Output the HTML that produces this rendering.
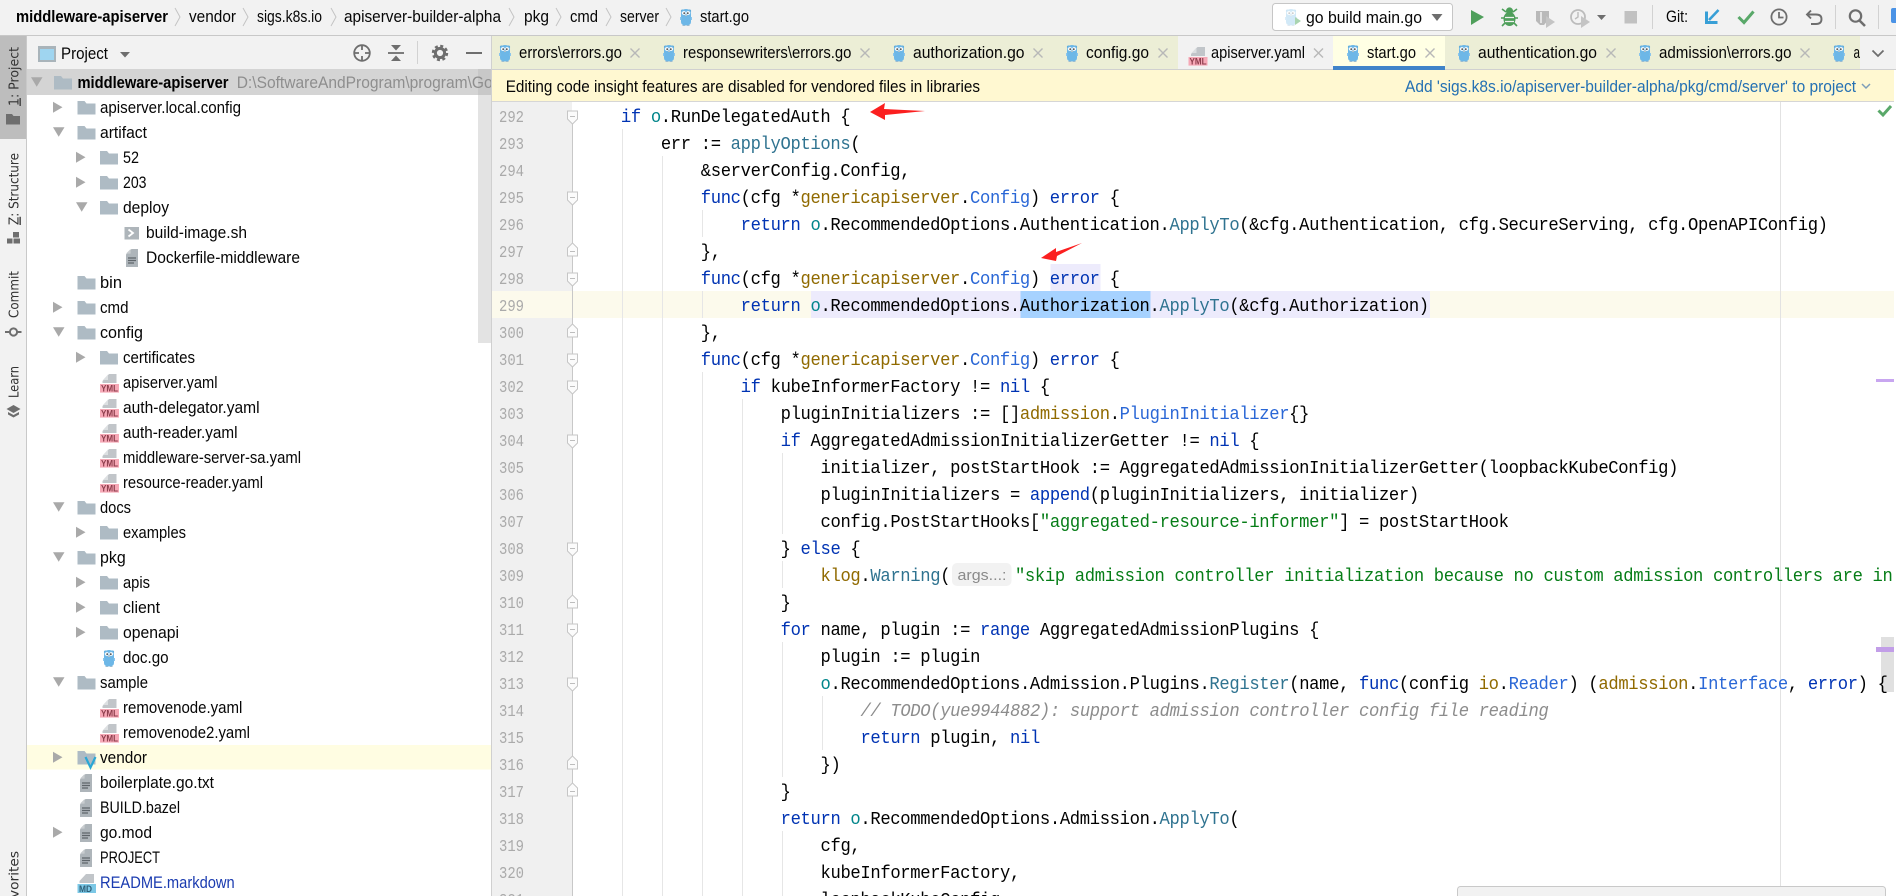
<!DOCTYPE html>
<html>
<head>
<meta charset="utf-8">
<title>middleware-apiserver</title>
<style>
html,body{margin:0;padding:0;background:#fff;width:1896px;height:896px;overflow:hidden}
svg{display:block}
text{font-family:"Liberation Sans",sans-serif;font-size:16.5px;fill:#060606}
.b{font-weight:bold;fill:#000}
.m{fill:#8e8e8e}
.sw{font-family:"DejaVu Sans",sans-serif;font-size:13px;fill:#333}
.n{font-family:"Liberation Mono",monospace;font-size:17px;fill:#aaaaaa}
.c text{font-family:"Liberation Mono",monospace;font-size:18.6px;letter-spacing:-.36px;fill:#000;white-space:pre}
.k{fill:#0033b3}
.t{fill:#2a67d6}
.p{fill:#906a00}
.f{fill:#2f7390}
.o{fill:#00858a}
.s{fill:#067d17}
.x{stroke:#b8b8b8;stroke-width:1.4;fill:none}
.g{fill:none;stroke:#e6e6e6;stroke-width:1}
.cv{fill:none;stroke:#c4c4c4;stroke-width:1}
</style>
</head>
<body>
<svg xmlns="http://www.w3.org/2000/svg" width="1896" height="896" viewBox="0 0 1896 896">
<defs>
<clipPath id="cc"><rect x="581" y="102" width="1313" height="794"/></clipPath>
<clipPath id="ct"><rect x="27" y="70" width="464" height="826"/></clipPath>
<g id="go">
<circle cx="2.4" cy="3" r="1.5" fill="#5ea9d9"/><circle cx="9.6" cy="3" r="1.5" fill="#5ea9d9"/>
<path d="M1 6.5Q1 1 6 1Q11 1 11 6.5V14Q11 17.5 6 17.5Q1 17.5 1 14Z" fill="#6db7e7"/>
<circle cx="3.9" cy="5" r="1.9" fill="#fff"/><circle cx="8.1" cy="5" r="1.9" fill="#fff"/>
<circle cx="4.2" cy="5.1" r=".9" fill="#444"/><circle cx="7.8" cy="5.1" r=".9" fill="#444"/>
<ellipse cx="6" cy="7.3" rx="1.2" ry=".8" fill="#b9c4c8"/>
<rect x="0" y="9" width="1.3" height="3" fill="#8cc6ec"/><rect x="10.7" y="9" width="1.3" height="3" fill="#8cc6ec"/>
<rect x="2.5" y="17" width="2.5" height="1" fill="#9cbcd0"/><rect x="7" y="17" width="2.5" height="1" fill="#9cbcd0"/>
</g>
<path id="ar" d="M0 6.7L9.5 12.2L0 17.7Z" fill="#a9a9a9"/>
<path id="ad" d="M0 7.3H11.5L5.7 16.7Z" fill="#a9a9a9"/>
<path id="fo" d="M0 6H7L9 8.5H18V19.5H0Z" fill="#aebbc4"/>
<g id="tx">
<path d="M5.5 4H12V22H0V9.5Z" fill="#aeb5ba"/><path d="M4.6 4V8.6H0Z" fill="#c9cdd0"/>
<path d="M2 13H10M2 15.5H10M2 18H8" stroke="#5f666b" stroke-width="1.2"/>
</g>
<g id="ym">
<path d="M9 4H16.5V13H2.5V11Z" fill="#c1c5c9"/><path d="M8 4.5V10H3Z" fill="#dcdfe1"/>
<rect x="0" y="14" width="19" height="8.6" fill="#f6a8b6"/>
<text x="1" y="21.6" textLength="17" lengthAdjust="spacingAndGlyphs" style="font-size:9px;font-weight:bold;fill:#8c3d4c">YML</text>
</g>
</defs>

<!-- base -->
<rect width="1896" height="896" fill="#ffffff"/>
<rect width="1896" height="35" fill="#f2f2f2"/>
<rect y="35" width="1896" height="1" fill="#c8c8c8"/>

<!-- breadcrumb -->
<text class="b" x="16" y="22" textLength="152" lengthAdjust="spacingAndGlyphs">middleware-apiserver</text>
<path class="cv" d="M175 8L180 17L175 26M243 8L248 17L243 26M331 8L336 17L331 26M509 8L514 17L509 26M556 8L561 17L556 26M606 8L611 17L606 26M666 8L671 17L666 26"/>
<text x="189" y="22" textLength="47" lengthAdjust="spacingAndGlyphs">vendor</text>
<text x="257" y="22" textLength="65" lengthAdjust="spacingAndGlyphs">sigs.k8s.io</text>
<text x="344" y="22" textLength="157" lengthAdjust="spacingAndGlyphs">apiserver-builder-alpha</text>
<text x="524" y="22" textLength="25" lengthAdjust="spacingAndGlyphs">pkg</text>
<text x="570" y="22" textLength="28" lengthAdjust="spacingAndGlyphs">cmd</text>
<text x="620" y="22" textLength="39" lengthAdjust="spacingAndGlyphs">server</text>
<use href="#go" x="680" y="8"/>
<text x="700" y="22" textLength="49" lengthAdjust="spacingAndGlyphs">start.go</text>

<!-- run toolbar -->
<rect x="1272.5" y="3.5" width="180" height="27" rx="3" fill="#fff" stroke="#c6c6c6"/>
<use href="#go" x="1285" y="8" opacity=".3"/>
<path d="M1295 17L1301 21L1295 25Z" fill="#a9d4b0"/>
<text x="1306" y="23" textLength="116" lengthAdjust="spacingAndGlyphs">go build main.go</text>
<path d="M1431.5 14H1442.5L1437 21Z" fill="#6e6e6e"/>
<path d="M1471 10L1484 17L1471 25Z" fill="#4f9f5b"/>
<g fill="#4f9f5b">
<ellipse cx="1509.5" cy="19" rx="6" ry="7"/><circle cx="1509.5" cy="11" r="3.6"/>
<path d="M1502 9L1506 12M1517 9L1513 12M1501 18H1518M1502 26L1505 23M1517 26L1514 23" stroke="#4f9f5b" stroke-width="1.6"/>
<path d="M1505 17.5H1514M1505 21.5H1514" stroke="#f2f2f2" stroke-width="1.3"/>
</g>
<path d="M1536 11H1549V19L1544 25H1540L1536 21Z" fill="#b9b9b9"/><path d="M1541 12V23" stroke="#f2f2f2" stroke-width="1.5"/>
<path d="M1546 16L1555 22L1546 28Z" fill="#c4c4c4"/>
<circle cx="1578" cy="17" r="7" fill="none" stroke="#bcbcbc" stroke-width="1.8"/><path d="M1578 12V17L1575 19" fill="none" stroke="#bcbcbc" stroke-width="1.4"/>
<path d="M1581 16L1590 22L1581 28Z" fill="#c4c4c4"/>
<path d="M1597 15H1606L1601.5 20Z" fill="#6e6e6e"/>
<rect x="1624.5" y="11" width="12.5" height="12.5" fill="#c1c1c1"/>
<rect x="1652" y="5" width="1" height="24" fill="#d2d2d2"/>
<text x="1666" y="22" textLength="22" lengthAdjust="spacingAndGlyphs">Git:</text>
<path d="M1718.5 10L1709 20" stroke="#389fd6" stroke-width="2.6" fill="none"/><path d="M1705 11.5V24H1717.5V21H1708V11.5Z" fill="#389fd6"/>
<path d="M1738.5 17L1744 22.5L1753.5 11.5" fill="none" stroke="#59a869" stroke-width="3"/>
<circle cx="1779" cy="17" r="7.6" fill="none" stroke="#6e6e6e" stroke-width="1.8"/><path d="M1779 12V17.5H1783.5" fill="none" stroke="#6e6e6e" stroke-width="1.8"/>
<path d="M1811 10.5L1807 14.5L1811 18.5M1807.5 14.5H1816Q1821.5 14.5 1821.5 19Q1821.5 24 1816 24H1811" fill="none" stroke="#6e6e6e" stroke-width="1.9"/>
<rect x="1835" y="5" width="1" height="24" fill="#d2d2d2"/>
<circle cx="1855.5" cy="16" r="5.7" fill="none" stroke="#6e6e6e" stroke-width="2.2"/><path d="M1859.5 20.5L1865 26" stroke="#6e6e6e" stroke-width="2.6"/>
<rect x="1878" y="5" width="1" height="24" fill="#d2d2d2"/>
<rect x="1891" y="8" width="7" height="15" rx="2" fill="#4b93e6"/>

<!-- left stripe -->
<rect x="0" y="36" width="27" height="860" fill="#f2f2f2"/>
<rect x="26" y="36" width="1" height="860" fill="#c9c9c9"/>
<rect x="0" y="36" width="26" height="103" fill="#bdbdbd"/>
<text class="sw" transform="translate(18.5,106) rotate(-90)" textLength="59" lengthAdjust="spacingAndGlyphs"><tspan text-decoration="underline">1</tspan>: Project</text>
<path d="M6 114H12L13.5 116H20V124.5H6Z" fill="#6e6e6e"/>
<text class="sw" transform="translate(18.5,225) rotate(-90)" textLength="72" lengthAdjust="spacingAndGlyphs"><tspan text-decoration="underline">Z</tspan>: Structure</text>
<path d="M13 232H19V237.5H13ZM7 238.5H12.5V243.5H7ZM13.5 238.5H20V243.5H13.5Z" fill="#6e6e6e"/>
<text class="sw" transform="translate(18.5,318) rotate(-90)" textLength="47" lengthAdjust="spacingAndGlyphs">Commit</text>
<circle cx="13.5" cy="332" r="3.6" fill="none" stroke="#6e6e6e" stroke-width="2"/><path d="M5 332H9.5M17.5 332H21.5" stroke="#6e6e6e" stroke-width="2"/>
<text class="sw" transform="translate(18.5,398) rotate(-90)" textLength="32" lengthAdjust="spacingAndGlyphs">Learn</text>
<path d="M13.5 405L20.5 409L13.5 413L6.5 409Z" fill="#6e6e6e"/><path d="M8 412V414.5L13.5 417.5L19 414.5V412L13.5 415Z" fill="#6e6e6e"/>
<text class="sw" transform="translate(18.5,913) rotate(-90)" textLength="62" lengthAdjust="spacingAndGlyphs">Favorites</text>

<!-- project header -->
<rect x="27" y="36" width="464" height="33" fill="#f2f2f2"/>
<rect x="38" y="46" width="18" height="16" fill="#a9b4ba"/><rect x="40" y="49" width="14" height="11" fill="#9fd5f0"/>
<text x="61" y="59" textLength="47" lengthAdjust="spacingAndGlyphs">Project</text>
<path d="M120 52H130L125 57.5Z" fill="#6e6e6e"/>
<circle cx="362" cy="53" r="7.8" fill="none" stroke="#6e6e6e" stroke-width="1.8"/>
<path d="M362 45V50M362 56V61M354 53H359M365 53H370" stroke="#6e6e6e" stroke-width="1.8"/>
<path d="M388 53H404" stroke="#6e6e6e" stroke-width="1.8"/><path d="M391 45H401L396 50.5ZM396 55.5L401 61H391Z" fill="#6e6e6e"/>
<rect x="417" y="41" width="1" height="23" fill="#d2d2d2"/>
<circle cx="440" cy="53" r="4.6" fill="none" stroke="#6e6e6e" stroke-width="3"/>
<circle cx="440" cy="53" r="7" fill="none" stroke="#6e6e6e" stroke-width="2.4" stroke-dasharray="3 2.5"/>
<path d="M466 53H482" stroke="#6e6e6e" stroke-width="2"/>

<!-- tree backgrounds -->
<rect x="27" y="69" width="464" height="26" fill="#d4d4d4"/>
<rect x="27" y="745" width="464" height="24.5" fill="#fffde2"/>
<rect x="478" y="95" width="13" height="248" fill="#e3e3e3"/>
<rect x="478" y="69" width="13" height="26" fill="#c8c8c8"/>
<rect x="491" y="36" width="1" height="860" fill="#d0d0d0"/>

<!-- tree -->
<g clip-path="url(#ct)">
<text x="236.7" y="88" class="m" textLength="256" lengthAdjust="spacingAndGlyphs">D:\SoftwareAndProgram\program\Go</text>
</g>
<use href="#ad" x="31" y="70"/><use href="#fo" x="54" y="70"/>
<text class="b" x="77.5" y="88" textLength="151" lengthAdjust="spacingAndGlyphs">middleware-apiserver</text>

<use href="#ar" x="53" y="95"/><use href="#fo" x="77.5" y="95"/>
<text x="100" y="113" textLength="141" lengthAdjust="spacingAndGlyphs">apiserver.local.config</text>
<use href="#ad" x="53" y="120"/><use href="#fo" x="77.5" y="120"/>
<text x="100" y="138" textLength="47" lengthAdjust="spacingAndGlyphs">artifact</text>
<use href="#ar" x="76" y="145"/><use href="#fo" x="100" y="145"/>
<text x="123" y="163" textLength="16" lengthAdjust="spacingAndGlyphs">52</text>
<use href="#ar" x="76" y="170"/><use href="#fo" x="100" y="170"/>
<text x="123" y="188" textLength="23.5" lengthAdjust="spacingAndGlyphs">203</text>
<use href="#ad" x="76" y="195"/><use href="#fo" x="100" y="195"/>
<text x="123" y="213" textLength="46" lengthAdjust="spacingAndGlyphs">deploy</text>
<rect x="124.5" y="227" width="14.5" height="12.5" fill="#aeb5ba"/><path d="M128.5 229.5L133 233L128.5 236.5" fill="none" stroke="#fff" stroke-width="1.8"/>
<text x="146" y="238" textLength="101" lengthAdjust="spacingAndGlyphs">build-image.sh</text>
<use href="#tx" x="126" y="245"/>
<text x="146" y="263" textLength="154" lengthAdjust="spacingAndGlyphs">Dockerfile-middleware</text>
<use href="#fo" x="77.5" y="270"/>
<text x="100" y="288" textLength="22" lengthAdjust="spacingAndGlyphs">bin</text>
<use href="#ar" x="53" y="295"/><use href="#fo" x="77.5" y="295"/>
<text x="100" y="313" textLength="28.5" lengthAdjust="spacingAndGlyphs">cmd</text>
<use href="#ad" x="53" y="320"/><use href="#fo" x="77.5" y="320"/>
<text x="100" y="338" textLength="43" lengthAdjust="spacingAndGlyphs">config</text>
<use href="#ar" x="76" y="345"/><use href="#fo" x="100" y="345"/>
<text x="123" y="363" textLength="72" lengthAdjust="spacingAndGlyphs">certificates</text>
<use href="#ym" x="100" y="370"/>
<text x="123" y="388" textLength="94.5" lengthAdjust="spacingAndGlyphs">apiserver.yaml</text>
<use href="#ym" x="100" y="395"/>
<text x="123" y="413" textLength="136.6" lengthAdjust="spacingAndGlyphs">auth-delegator.yaml</text>
<use href="#ym" x="100" y="420"/>
<text x="123" y="438" textLength="114.5" lengthAdjust="spacingAndGlyphs">auth-reader.yaml</text>
<use href="#ym" x="100" y="445"/>
<text x="123" y="463" textLength="178" lengthAdjust="spacingAndGlyphs">middleware-server-sa.yaml</text>
<use href="#ym" x="100" y="470"/>
<text x="123" y="488" textLength="140" lengthAdjust="spacingAndGlyphs">resource-reader.yaml</text>
<use href="#ad" x="53" y="495"/><use href="#fo" x="77.5" y="495"/>
<text x="100" y="513" textLength="31" lengthAdjust="spacingAndGlyphs">docs</text>
<use href="#ar" x="76" y="520"/><use href="#fo" x="100" y="520"/>
<text x="123" y="538" textLength="63" lengthAdjust="spacingAndGlyphs">examples</text>
<use href="#ad" x="53" y="545"/><use href="#fo" x="77.5" y="545"/>
<text x="100" y="563" textLength="25.7" lengthAdjust="spacingAndGlyphs">pkg</text>
<use href="#ar" x="76" y="570"/><use href="#fo" x="100" y="570"/>
<text x="123" y="588" textLength="27" lengthAdjust="spacingAndGlyphs">apis</text>
<use href="#ar" x="76" y="595"/><use href="#fo" x="100" y="595"/>
<text x="123" y="613" textLength="37" lengthAdjust="spacingAndGlyphs">client</text>
<use href="#ar" x="76" y="620"/><use href="#fo" x="100" y="620"/>
<text x="123" y="638" textLength="56" lengthAdjust="spacingAndGlyphs">openapi</text>
<use href="#go" x="103" y="649"/>
<text x="123" y="663" textLength="45.6" lengthAdjust="spacingAndGlyphs">doc.go</text>
<use href="#ad" x="53" y="670"/><use href="#fo" x="77.5" y="670"/>
<text x="100" y="688" textLength="48" lengthAdjust="spacingAndGlyphs">sample</text>
<use href="#ym" x="100" y="695"/>
<text x="123" y="713" textLength="119.4" lengthAdjust="spacingAndGlyphs">removenode.yaml</text>
<use href="#ym" x="100" y="720"/>
<text x="123" y="738" textLength="127" lengthAdjust="spacingAndGlyphs">removenode2.yaml</text>
<use href="#ar" x="53" y="745"/><use href="#fo" x="77.5" y="745"/>
<path d="M85.5 757L90.5 767.5L95.5 757" fill="none" stroke="#2aa7d5" stroke-width="2.2"/>
<text x="100" y="763" textLength="47" lengthAdjust="spacingAndGlyphs">vendor</text>
<use href="#tx" x="80" y="770"/>
<text x="100" y="788" textLength="114" lengthAdjust="spacingAndGlyphs">boilerplate.go.txt</text>
<use href="#tx" x="80" y="795"/>
<text x="100" y="813" textLength="80" lengthAdjust="spacingAndGlyphs">BUILD.bazel</text>
<use href="#ar" x="53" y="820"/><use href="#tx" x="80" y="820"/>
<text x="100" y="838" textLength="52" lengthAdjust="spacingAndGlyphs">go.mod</text>
<use href="#tx" x="80" y="845"/>
<text x="100" y="863" textLength="60" lengthAdjust="spacingAndGlyphs">PROJECT</text>
<path d="M86 874H94V883H79.5V881Z" fill="#c1c5c9"/>
<rect x="77.5" y="884" width="18.5" height="9" fill="#7cc8e6"/>
<text x="79" y="892" textLength="13" lengthAdjust="spacingAndGlyphs" style="font-size:9px;font-weight:bold;fill:#2f5f78">MD</text>
<text x="100" y="888" textLength="134.7" lengthAdjust="spacingAndGlyphs" style="fill:#1a3bb0">README.markdown</text>

<!-- tabs -->
<rect x="492" y="36" width="1404" height="33" fill="#eceed6"/>
<rect x="1178" y="36" width="155" height="33" fill="#f2f2f2"/>
<rect x="1333" y="36" width="112" height="33" fill="#ffffe4"/>
<rect x="1333" y="66" width="112" height="4" fill="#4083c9"/>
<rect x="1860" y="36" width="36" height="33" fill="#f2f2f2"/>
<rect x="492" y="69" width="841" height="1" fill="#d0d0d0"/><rect x="1445" y="69" width="451" height="1" fill="#d0d0d0"/>

<use href="#go" x="499" y="44"/>
<text x="519" y="58" textLength="103" lengthAdjust="spacingAndGlyphs">errors\errors.go</text>
<path class="x" d="M630.5 48.5L639.5 57.5M639.5 48.5L630.5 57.5"/>
<use href="#go" x="663" y="44"/>
<text x="683" y="58" textLength="168.4" lengthAdjust="spacingAndGlyphs">responsewriters\errors.go</text>
<path class="x" d="M860.5 48.5L869.5 57.5M869.5 48.5L860.5 57.5"/>
<use href="#go" x="893" y="44"/>
<text x="913" y="58" textLength="111.5" lengthAdjust="spacingAndGlyphs">authorization.go</text>
<path class="x" d="M1033.5 48.5L1042.5 57.5M1042.5 48.5L1033.5 57.5"/>
<use href="#go" x="1066" y="44"/>
<text x="1086" y="58" textLength="63" lengthAdjust="spacingAndGlyphs">config.go</text>
<path class="x" d="M1158.5 48.5L1167.5 57.5M1167.5 48.5L1158.5 57.5"/>
<use href="#ym" x="1188.5" y="43"/>
<text x="1211" y="58" textLength="94" lengthAdjust="spacingAndGlyphs">apiserver.yaml</text>
<path class="x" d="M1314 48.5L1323 57.5M1323 48.5L1314 57.5"/>
<use href="#go" x="1347" y="44"/>
<text x="1367" y="58" textLength="49" lengthAdjust="spacingAndGlyphs">start.go</text>
<path class="x" d="M1425.5 48.5L1434.5 57.5M1434.5 48.5L1425.5 57.5"/>
<use href="#go" x="1458" y="44"/>
<text x="1478" y="58" textLength="119" lengthAdjust="spacingAndGlyphs">authentication.go</text>
<path class="x" d="M1606.5 48.5L1615.5 57.5M1615.5 48.5L1606.5 57.5"/>
<use href="#go" x="1639" y="44"/>
<text x="1659" y="58" textLength="132.5" lengthAdjust="spacingAndGlyphs">admission\errors.go</text>
<path class="x" d="M1800.5 48.5L1809.5 57.5M1809.5 48.5L1800.5 57.5"/>
<use href="#go" x="1833" y="44"/>
<text x="1853.5" y="58" textLength="6.5" lengthAdjust="spacingAndGlyphs">a</text>
<path d="M1872.5 50.5L1878 56L1883.5 50.5" fill="none" stroke="#6e6e6e" stroke-width="1.8"/>

<!-- notification -->
<rect x="492" y="70" width="1402" height="31" fill="#fff8d1"/>
<rect x="492" y="101" width="1402" height="1" fill="#d6d6d6"/>
<text x="505.7" y="92" textLength="474.3" lengthAdjust="spacingAndGlyphs">Editing code insight features are disabled for vendored files in libraries</text>
<text x="1405" y="92" textLength="451" lengthAdjust="spacingAndGlyphs" style="fill:#2470b3">Add 'sigs.k8s.io/apiserver-builder-alpha/pkg/cmd/server' to project</text>
<path d="M1862 84L1866 88L1870 84" fill="none" stroke="#7d9db8" stroke-width="1.5"/>

<!-- editor backgrounds -->
<rect x="492" y="102" width="80" height="794" fill="#f0f0f0"/>
<rect x="492" y="291" width="1402" height="27" fill="#fcfaec"/>
<rect x="1050.5" y="264" width="50" height="27" fill="#edebfc"/>
<rect x="811" y="291" width="619" height="27" fill="#edebfc"/>
<rect x="1020.5" y="291" width="130" height="27" fill="#a6d2ff"/>
<rect x="952" y="563" width="59.5" height="23" rx="5" fill="#f2f2f2"/>
<rect x="1780" y="102" width="1" height="784" fill="#e2e2e2"/>
<rect x="1881" y="637" width="13" height="55" fill="#e0e0e0"/>
<rect x="1876" y="379" width="18" height="3" fill="#c8a6f0"/>
<rect x="1876" y="647" width="18" height="5" fill="#c29ee8"/>

<!-- indent guides -->
<path class="g" d="M622.5 129V896M662.5 156V896M702.5 210V237M702.5 291V318M702.5 372V896M742.5 399V896M782.5 453V534M782.5 561V588M782.5 642V777M782.5 831V896M822.5 696V750"/>

<!-- fold line + markers -->
<path d="M572.5 116V896" stroke="#c8c8c8" stroke-width="1"/>
<g fill="#fbfbfb" stroke="#c6c6c6" stroke-width="1">
<path d="M567.5 111H577.5V119L572.5 124L567.5 119Z"/>
<path d="M567.5 192H577.5V200L572.5 205L567.5 200Z"/>
<path d="M567.5 273H577.5V281L572.5 286L567.5 281Z"/>
<path d="M567.5 354H577.5V362L572.5 367L567.5 362Z"/>
<path d="M567.5 381H577.5V389L572.5 394L567.5 389Z"/>
<path d="M567.5 435H577.5V443L572.5 448L567.5 443Z"/>
<path d="M567.5 543H577.5V551L572.5 556L567.5 551Z"/>
<path d="M567.5 624H577.5V632L572.5 637L567.5 632Z"/>
<path d="M567.5 678H577.5V686L572.5 691L567.5 686Z"/>
<path d="M572.5 243L577.5 248V256H567.5V248Z"/>
<path d="M572.5 324L577.5 329V337H567.5V329Z"/>
<path d="M572.5 595L577.5 600V608H567.5V600Z"/>
<path d="M572.5 756L577.5 761V769H567.5V761Z"/>
<path d="M572.5 783L577.5 788V796H567.5V788Z"/>
</g>
<path d="M570 116.5H575M570 197.5H575M570 251.5H575M570 278.5H575M570 332.5H575M570 359.5H575M570 386.5H575M570 440.5H575M570 548.5H575M570 602.5H575M570 629.5H575M570 683.5H575M570 764.5H575M570 791.5H575" stroke="#bdbdbd"/>

<!-- line numbers -->
<g>
<text class="n" x="499" y="122" textLength="25" lengthAdjust="spacingAndGlyphs">292</text>
<text class="n" x="499" y="149" textLength="25" lengthAdjust="spacingAndGlyphs">293</text>
<text class="n" x="499" y="176" textLength="25" lengthAdjust="spacingAndGlyphs">294</text>
<text class="n" x="499" y="203" textLength="25" lengthAdjust="spacingAndGlyphs">295</text>
<text class="n" x="499" y="230" textLength="25" lengthAdjust="spacingAndGlyphs">296</text>
<text class="n" x="499" y="257" textLength="25" lengthAdjust="spacingAndGlyphs">297</text>
<text class="n" x="499" y="284" textLength="25" lengthAdjust="spacingAndGlyphs">298</text>
<text class="n" x="499" y="311" textLength="25" lengthAdjust="spacingAndGlyphs">299</text>
<text class="n" x="499" y="338" textLength="25" lengthAdjust="spacingAndGlyphs">300</text>
<text class="n" x="499" y="365" textLength="25" lengthAdjust="spacingAndGlyphs">301</text>
<text class="n" x="499" y="392" textLength="25" lengthAdjust="spacingAndGlyphs">302</text>
<text class="n" x="499" y="419" textLength="25" lengthAdjust="spacingAndGlyphs">303</text>
<text class="n" x="499" y="446" textLength="25" lengthAdjust="spacingAndGlyphs">304</text>
<text class="n" x="499" y="473" textLength="25" lengthAdjust="spacingAndGlyphs">305</text>
<text class="n" x="499" y="500" textLength="25" lengthAdjust="spacingAndGlyphs">306</text>
<text class="n" x="499" y="527" textLength="25" lengthAdjust="spacingAndGlyphs">307</text>
<text class="n" x="499" y="554" textLength="25" lengthAdjust="spacingAndGlyphs">308</text>
<text class="n" x="499" y="581" textLength="25" lengthAdjust="spacingAndGlyphs">309</text>
<text class="n" x="499" y="608" textLength="25" lengthAdjust="spacingAndGlyphs">310</text>
<text class="n" x="499" y="635" textLength="25" lengthAdjust="spacingAndGlyphs">311</text>
<text class="n" x="499" y="662" textLength="25" lengthAdjust="spacingAndGlyphs">312</text>
<text class="n" x="499" y="689" textLength="25" lengthAdjust="spacingAndGlyphs">313</text>
<text class="n" x="499" y="716" textLength="25" lengthAdjust="spacingAndGlyphs">314</text>
<text class="n" x="499" y="743" textLength="25" lengthAdjust="spacingAndGlyphs">315</text>
<text class="n" x="499" y="770" textLength="25" lengthAdjust="spacingAndGlyphs">316</text>
<text class="n" x="499" y="797" textLength="25" lengthAdjust="spacingAndGlyphs">317</text>
<text class="n" x="499" y="824" textLength="25" lengthAdjust="spacingAndGlyphs">318</text>
<text class="n" x="499" y="851" textLength="25" lengthAdjust="spacingAndGlyphs">319</text>
<text class="n" x="499" y="878" textLength="25" lengthAdjust="spacingAndGlyphs">320</text>
<text class="n" x="499" y="905" textLength="25" lengthAdjust="spacingAndGlyphs">321</text>
</g>

<!-- code -->
<g clip-path="url(#cc)">
<g class="c" transform="translate(581,0) scale(.9241,1)">
<text x="43.2" y="122"><tspan class="k">if</tspan> <tspan class="o">o</tspan>.RunDelegatedAuth {</text>
<text x="86.4" y="149">err := <tspan class="f">applyOptions</tspan>(</text>
<text x="129.6" y="176">&amp;serverConfig.Config,</text>
<text x="129.6" y="203"><tspan class="k">func</tspan>(cfg *<tspan class="p">genericapiserver</tspan>.<tspan class="t">Config</tspan>) <tspan class="k">error</tspan> {</text>
<text x="172.8" y="230"><tspan class="k">return</tspan> <tspan class="o">o</tspan>.RecommendedOptions.Authentication.<tspan class="f">ApplyTo</tspan>(&amp;cfg.Authentication, cfg.SecureServing, cfg.OpenAPIConfig)</text>
<text x="129.6" y="257">},</text>
<text x="129.6" y="284"><tspan class="k">func</tspan>(cfg *<tspan class="p">genericapiserver</tspan>.<tspan class="t">Config</tspan>) <tspan class="k">error</tspan> {</text>
<text x="172.8" y="311"><tspan class="k">return</tspan> <tspan class="o">o</tspan>.RecommendedOptions.Authorization.<tspan class="f">ApplyTo</tspan>(&amp;cfg.Authorization)</text>
<text x="129.6" y="338">},</text>
<text x="129.6" y="365"><tspan class="k">func</tspan>(cfg *<tspan class="p">genericapiserver</tspan>.<tspan class="t">Config</tspan>) <tspan class="k">error</tspan> {</text>
<text x="172.8" y="392"><tspan class="k">if</tspan> kubeInformerFactory != <tspan class="k">nil</tspan> {</text>
<text x="216" y="419">pluginInitializers := []<tspan class="p">admission</tspan>.<tspan class="t">PluginInitializer</tspan>{}</text>
<text x="216" y="446"><tspan class="k">if</tspan> AggregatedAdmissionInitializerGetter != <tspan class="k">nil</tspan> {</text>
<text x="259.2" y="473">initializer, postStartHook := AggregatedAdmissionInitializerGetter(loopbackKubeConfig)</text>
<text x="259.2" y="500">pluginInitializers = <tspan class="k">append</tspan>(pluginInitializers, initializer)</text>
<text x="259.2" y="527">config.PostStartHooks[<tspan class="s">"aggregated-resource-informer"</tspan>] = postStartHook</text>
<text x="216" y="554">} <tspan class="k">else</tspan> {</text>
<text x="259.2" y="581"><tspan class="p">klog</tspan>.<tspan class="f">Warning</tspan>(</text>
<text x="469.6" y="581" style="fill:#067d17">"skip admission controller initialization because no custom admission controllers are in</text>
<text x="216" y="608">}</text>
<text x="216" y="635"><tspan class="k">for</tspan> name, plugin := <tspan class="k">range</tspan> AggregatedAdmissionPlugins {</text>
<text x="259.2" y="662">plugin := plugin</text>
<text x="259.2" y="689"><tspan class="o">o</tspan>.RecommendedOptions.Admission.Plugins.<tspan class="f">Register</tspan>(name, <tspan class="k">func</tspan>(config <tspan class="p">io</tspan>.<tspan class="t">Reader</tspan>) (<tspan class="p">admission</tspan>.<tspan class="t">Interface</tspan>, <tspan class="k">error</tspan>) {</text>
<text x="302.4" y="716" style="fill:#8c8c8c;font-style:italic">// TODO(yue9944882): support admission controller config file reading</text>
<text x="302.4" y="743"><tspan class="k">return</tspan> plugin, <tspan class="k">nil</tspan></text>
<text x="259.2" y="770">})</text>
<text x="216" y="797">}</text>
<text x="216" y="824"><tspan class="k">return</tspan> <tspan class="o">o</tspan>.RecommendedOptions.Admission.<tspan class="f">ApplyTo</tspan>(</text>
<text x="259.2" y="851">cfg,</text>
<text x="259.2" y="878">kubeInformerFactory,</text>
<text x="259.2" y="905">loopbackKubeConfig,</text>
</g>
</g>
<text x="957.5" y="580" textLength="49" lengthAdjust="spacingAndGlyphs" style="font-size:15px;fill:#8a8a8a">args...:</text>

<!-- inspection check -->
<path d="M1878.5 110.5L1883 115L1891 106" fill="none" stroke="#59a869" stroke-width="3"/>

<!-- bottom popup -->
<rect x="1457.5" y="886.5" width="428" height="20" rx="3" fill="#f2f2f2" stroke="#c9c9c9"/>

<!-- annotation arrows -->
<path d="M870 112L885 103L884 109L925 111L885 115L885 120Z" fill="#fb1f1f"/>
<path d="M1041 258L1056 248L1056 252L1082 243L1057 256L1056 261Z" fill="#fb1f1f"/>
</svg>
</body>
</html>
